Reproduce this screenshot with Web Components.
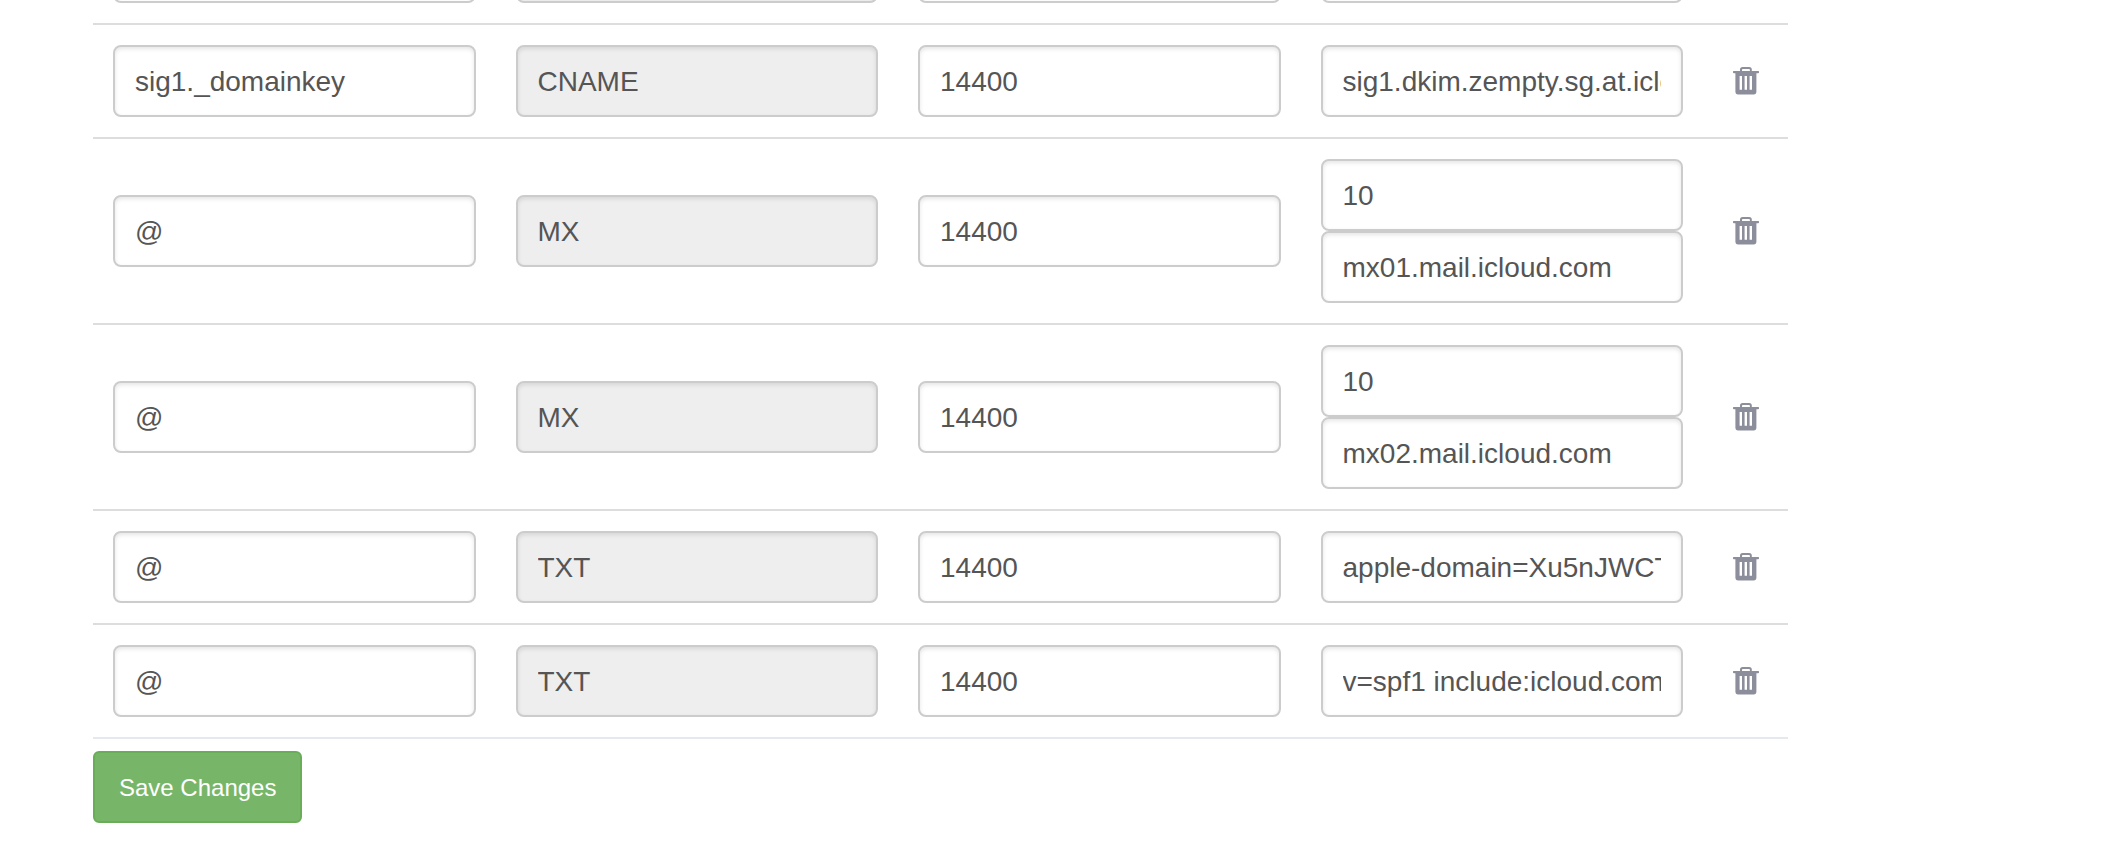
<!DOCTYPE html>
<html lang="en">
<head>
<meta charset="utf-8">
<meta name="viewport" content="width=device-width, initial-scale=1">
<title>DNS records</title>
<style>
  html, body { margin: 0; background: #fff; }
  body { overflow: hidden; font-family: "Liberation Sans", Arial, sans-serif; color: #555; }
</style>
</head>
<body>
<dns-page>
  <dns-records></dns-records>
  <save-button slot="actions">Save Changes</save-button>
</dns-page>

<script>
const attach = (host, html) => {
  const t = document.createElement('template');
  t.innerHTML = html;
  const root = host.attachShadow({ mode: 'open' });
  root.append(t.content.cloneNode(true));
  return root;
};

class DnsPage extends HTMLElement {
  constructor() {
    super();
    attach(this, `
      <style>
        :host { display: block; }
        /* The list is scrolled so that the first row shows only its lower edge. */
        main { margin: -91px 324px 0 93px; display: flex; flex-direction: column; gap: 12px; }
        footer { display: flex; }
      </style>
      <main><slot></slot><footer><slot name="actions"></slot></footer></main>`);
  }
}

class RecordField extends HTMLElement {
  connectedCallback() {
    if (this.shadowRoot) return;
    const root = attach(this, `
      <style>
        :host { display: block; }
        input {
          display: block; box-sizing: border-box; width: 100%; height: 72px; margin: 0;
          padding: 2px 20px 0; border: 2px solid #ccc; border-radius: 8px; background: #fff;
          box-shadow: inset 0 2px 4px rgba(0, 0, 0, .1);
          font: 28px/40px "Liberation Sans", Arial, sans-serif; color: #555; outline: 0;
        }
        input[readonly] { background: #eee; }
      </style>
      <input type="text" spellcheck="false">`);
    const input = root.querySelector('input');
    input.value = this.getAttribute('value') || '';
    input.setAttribute('aria-label', this.getAttribute('label'));
    input.readOnly = this.hasAttribute('locked');
  }
}

class DeleteButton extends HTMLElement {
  constructor() {
    super();
    attach(this, `
      <style>
        :host { display: flex; justify-content: center; }
        button { display: flex; margin: 0; padding: 0; border: 0; background: none; color: #8d8e9b; cursor: pointer; }
        svg { display: block; width: 26px; height: 28px; }
      </style>
      <button type="button" aria-label="Delete record">
        <svg viewBox="0 0 26 28" fill="currentColor" aria-hidden="true">
          <path fill-rule="evenodd" d="M0.5 4H7V2.6Q7 0 9.6 0H16.2Q18.8 0 18.8 2.6V4H25.5Q26 4 26 4.8V5.6Q26 6.3 25 6.3H23.4V24.6Q23.4 27.6 20.6 27.6H5.2Q2.4 27.6 2.4 24.6V6.3H1Q0 6.3 0 5.6V4.8Q0 4 .5 4ZM9 4H16.9V2.8Q16.9 1.9 16 1.9H9.9Q9 1.9 9 2.8ZM6.6 9V22.8H9V9ZM11.6 9V22.8H14V9ZM16.6 9V22.8H19V9Z"/>
        </svg>
      </button>`);
  }
}

class SaveButton extends HTMLElement {
  constructor() {
    super();
    attach(this, `
      <style>
        :host { display: block; }
        button {
          display: block; height: 72px; margin: 0; padding: 2px 24px 0; border: 2px solid #6aad58;
          border-radius: 6px; background: #77b668; color: #fff; cursor: pointer;
          font: 24px/36px "Liberation Sans", Arial, sans-serif;
        }
      </style>
      <button type="submit"><slot></slot></button>`);
  }
}

const RECORDS = [
  { name: '', type: '', ttl: '', data: [''] },
  { name: 'sig1._domainkey', type: 'CNAME', ttl: '14400', data: ['sig1.dkim.zempty.sg.at.icloudmailadmin.com'] },
  { name: '@', type: 'MX', ttl: '14400', data: ['10', 'mx01.mail.icloud.com'] },
  { name: '@', type: 'MX', ttl: '14400', data: ['10', 'mx02.mail.icloud.com'] },
  { name: '@', type: 'TXT', ttl: '14400', data: ['apple-domain=Xu5nJWCT'] },
  { name: '@', type: 'TXT', ttl: '14400', data: ['v=spf1 include:icloud.com ~all'] },
];

class DnsRecords extends HTMLElement {
  constructor() {
    super();
    const field = (label, value, locked) =>
      `<record-field label="${label}" value="${value}"${locked ? ' locked' : ''}></record-field>`;
    const rows = RECORDS.map(r => `
      <tr>
        <td>${field('Name', r.name)}</td>
        <td>${field('Type', r.type, true)}</td>
        <td>${field('TTL', r.ttl)}</td>
        <td>${r.data.map((v, i) => field(r.data.length > 1 && i === 0 ? 'Priority' : 'Data', v)).join('')}</td>
        <td class="action"><delete-button></delete-button></td>
      </tr>`).join('');
    attach(this, `
      <style>
        :host { display: block; }
        table { width: 100%; table-layout: fixed; border-collapse: separate; border-spacing: 0; border-bottom: 2px solid #e5e8ed; }
        td { padding: 20px; border-top: 2px solid #ddd; vertical-align: middle; }
        col.action { width: 85px; }
        td.action { padding: 0; }
      </style>
      <table aria-label="DNS records">
        <colgroup><col><col><col><col><col class="action"></colgroup>
        <tbody>${rows}</tbody>
      </table>`);
  }
}

customElements.define('record-field', RecordField);
customElements.define('delete-button', DeleteButton);
customElements.define('save-button', SaveButton);
customElements.define('dns-records', DnsRecords);
customElements.define('dns-page', DnsPage);
</script>
</body>
</html>
